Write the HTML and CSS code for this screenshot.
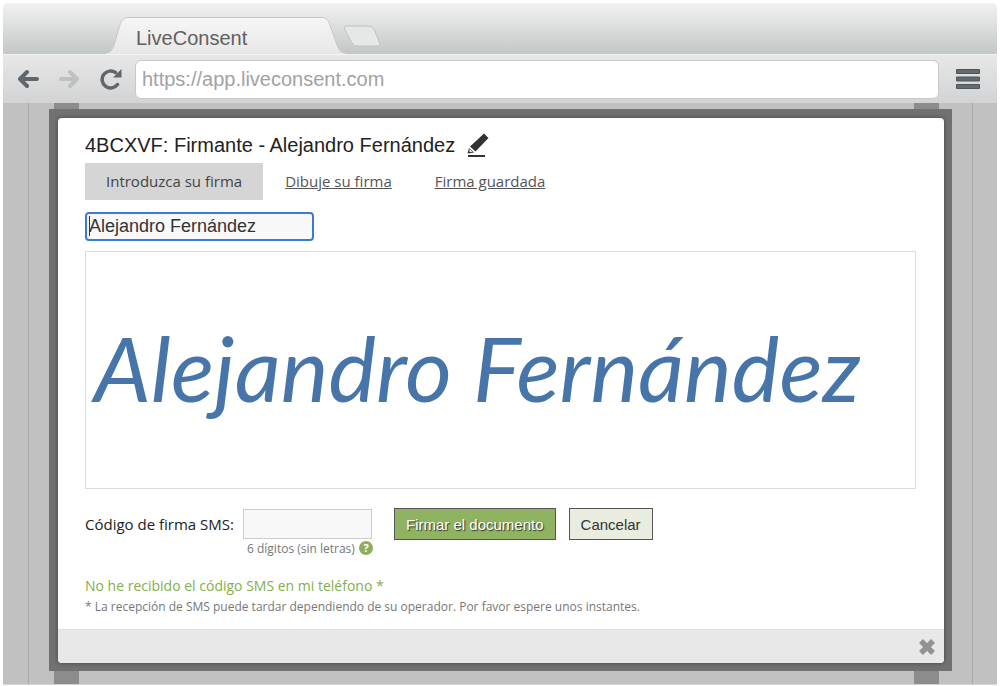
FILE: index.html
```html
<!DOCTYPE html>
<html lang="es">
<head>
	<meta charset="utf-8">
	<meta name="viewport" content="width=device-width, initial-scale=1">
	<title>LiveConsent</title>
	<link rel="stylesheet" href="styles.css">
</head>
<body>

    <div class="browser">
        <div class="tab-strip">
            <svg class="tab-side" width="24" height="37" viewBox="0 0 24 37">
                <defs>
                    <linearGradient id="tabFill" x1="0" y1="0" x2="0" y2="1">
                        <stop offset="0" stop-color="#f6f6f6"/>
                        <stop offset="1" stop-color="#e7e7e7"/>
                    </linearGradient>
                </defs>
                <path d="M0 37C6 36 8 34 10 28L15 11C17 4 19 1 24 0V37Z" fill="url(#tabFill)"/>
                <path d="M0 36.500C6 35.500 8 33.500 10 28L15 11C17 4 19 1 24 .5" fill="none" stroke="#c6c8c8"/>
            </svg>
            <div class="tab">LiveConsent</div>
            <svg class="tab-side" width="26" height="37" viewBox="0 0 26 37">
                <path d="M26 37C19 36 17 34 15 28L9 11C7 4 5 1 0 0V37Z" fill="url(#tabFill)"/>
                <path d="M26 36.500C19 35.500 17 33.500 15 28L9 11C7 4 5 1 0 .5" fill="none" stroke="#c6c8c8"/>
            </svg>
            <svg class="new-tab" width="38" height="22" viewBox="0 0 38 22">
                <path d="M4 1H25Q29 1 31 4L36 16Q38 21 34 21H14Q11 21 9 18L2 5Q0 1 4 1Z" fill="#e6e7e7" stroke="#bfc1c1"/>
            </svg>
        </div>

        <div class="toolbar">
            <button class="icon-button" aria-label="Atrás">
                <svg width="22" height="20" viewBox="0 0 22 20" fill="none" stroke="#5f676c" stroke-width="4" stroke-linecap="round" stroke-linejoin="round">
                    <path d="M9 3L2 10L9 17M3 10H19"/>
                </svg>
            </button>
            <button class="icon-button" aria-label="Adelante">
                <svg width="22" height="20" viewBox="0 0 22 20" fill="none" stroke="#bfc0c1" stroke-width="4" stroke-linecap="round" stroke-linejoin="round">
                    <path d="M11 3L18 10L11 17M17 10H2"/>
                </svg>
            </button>
            <button class="icon-button" aria-label="Recargar">
                <svg width="22" height="22" viewBox="0 0 22 22">
                    <path d="M17.500 16.500A8.500 8.500 0 1 1 15.500 4.500" fill="none" stroke="#5f676c" stroke-width="3.500" stroke-linecap="round"/>
                    <path d="M21.500 1V9.500H13Z" fill="#5f676c"/>
                </svg>
            </button>
            <input class="address" type="text" value="https://app.liveconsent.com" aria-label="Dirección">
            <button class="icon-button menu" aria-label="Menú">
                <svg width="24" height="20" viewBox="0 0 24 20" fill="#626a70" stroke="#4f565b">
                    <path d="M.5.5h23v4H.5zM.5 8h23v4H.5zM.5 15.500h23v4H.5z"/>
                </svg>
            </button>
        </div>

        <div class="page">
            <div class="modal-frame">
                <div class="modal">
                    <div class="modal-body">
                        <div class="heading">
                            <h1>4BCXVF: Firmante - Alejandro Fernández</h1>
                            <button class="icon-button" aria-label="Editar">
                                <svg width="24" height="26" viewBox="0 0 24 26" fill="#333">
                                    <path d="M18 1.500L22.500 6L9.500 19.500L4 14.500ZM3 16L8 20.500L1.500 21.500Z"/>
                                    <path d="M3.500 17L6.500 19.800L3.500 20Z" fill="#fff"/>
                                    <path d="M2 23h17v2H2z"/>
                                </svg>
                            </button>
                        </div>

                        <div class="tabs">
                            <a class="active" href="#">Introduzca su firma</a>
                            <a href="#">Dibuje su firma</a>
                            <a href="#">Firma guardada</a>
                        </div>

                        <div class="name-field">
                            <span class="caret"></span>
                            <input class="name" type="text" value="Alejandro Fernández" aria-label="Nombre">
                        </div>

                        <div class="signature">Alejandro Fernández</div>

                        <div class="sms">
                            <label for="code">Código de firma SMS:</label>
                            <div class="code">
                                <input type="text" id="code">
                                <div class="hint">
                                    6 dígitos (sin letras)
                                    <button class="help" aria-label="Ayuda">?</button>
                                </div>
                            </div>
                            <button class="button sign">Firmar el documento</button>
                            <button class="button cancel">Cancelar</button>
                        </div>

                        <a class="resend" href="#">No he recibido el código SMS en mi teléfono *</a>
                        <p class="note">* La recepción de SMS puede tardar dependiendo de su operador. Por favor espere unos instantes.</p>
                    </div>

                    <div class="modal-footer">
                        <button class="icon-button" aria-label="Cerrar">
                            <svg width="18" height="18" viewBox="0 0 18 18">
                                <path d="M3 3L15 15M15 3L3 15" stroke="#929292" stroke-width="5.500"/>
                            </svg>
                        </button>
                    </div>
                </div>
            </div>
        </div>
    </div>

</body>
</html>
```
FILE: styles.css
```css
* {
    box-sizing: border-box;
}

body {
    margin: 3px;
    background: #fff;
    font-family: "Open Sans", sans-serif;
    color: #333;
}

button {
    cursor: pointer;
}

.icon-button {
    display: flex;
    padding: 0;
    border: none;
    background: none;
}

.browser {
    border-radius: 5px 5px 0 0;
    overflow: hidden;
}

.tab-strip {
    display: flex;
    align-items: flex-end;
    height: 51px;
    padding-left: 101px;
    background: linear-gradient(#f1f1f1, #e2e4e3 35%, #c2c6c6);
}

.tab-side {
    display: block;
}

.tab {
    flex: 0 1 194px;
    height: 37px;
    padding-left: 8px;
    border-top: 1px solid #c6c8c8;
    background: linear-gradient(#f6f6f6, #e7e7e7);
    font: 20px/40px "Liberation Sans", Arial, sans-serif;
    color: #606060;
}

.new-tab {
    align-self: center;
    margin-top: 15px;
    margin-left: -5px;
}

.toolbar {
    display: flex;
    align-items: center;
    gap: 19px;
    height: 49px;
    padding: 0 17px 0 15px;
    border-top: 1px solid #f3f3f3;
    background: linear-gradient(#e7e7e7, #d2d3d4);
}

.address {
    flex: 1;
    min-width: 0;
    height: 39px;
    margin-left: -6px;
    margin-right: -2px;
    padding: 0 6px;
    border: 1px solid #c9c9c9;
    border-radius: 6px;
    background: #fff;
    font: 20px "Liberation Sans", Arial, sans-serif;
    color: #a2a2a2;
}

.page {
    padding: 6px 45px 13px 46px;
    border-bottom: 1px solid #d4d4d4;
    background:
        linear-gradient(#aaa, #aaa) 25px 0 / 1px 100% no-repeat,
        linear-gradient(#aaa, #aaa) right 24px top 0 / 1px 100% no-repeat,
        linear-gradient(#8c8c8c, #8c8c8c) 51px 0 / 25px 100% no-repeat,
        linear-gradient(#8c8c8c, #8c8c8c) right 58px top 0 / 25px 100% no-repeat,
        #c1c1c1;
}

.modal-frame {
    padding: 9px 8px 8px 9px;
    background: #717171;
}

.modal {
    border-radius: 4px;
    background: #fff;
    box-shadow: 0 0 4px #444;
    overflow: hidden;
}

.modal-body {
    padding: 13px 28px 11px 27px;
}

.heading {
    display: flex;
    align-items: center;
    gap: 11px;
    height: 28px;
}

h1 {
    margin: 0;
    font: 20px/28px "Liberation Sans", Arial, sans-serif;
    color: #222;
}

.tabs {
    display: flex;
    gap: 22px;
    margin-top: 4px;
}

.tabs a {
    line-height: 37px;
    font-size: 15px;
    color: #555;
    margin-right: 21px;
}

.tabs .active {
    margin-right: 0;
    padding: 0 21px;
    background: #d5d5d5;
    color: #444;
    text-decoration: none;
}

.name-field {
    position: relative;
    width: 229px;
    margin-top: 12px;
}

.name {
    display: block;
    width: 100%;
    height: 29px;
    padding: 0 2px;
    border: 2px solid #3b7bd8;
    border-radius: 4px;
    background: #f8f8f8;
    font: 18px "Liberation Sans", Arial, sans-serif;
    color: #333;
}

.caret {
    position: absolute;
    top: 4px;
    left: 4px;
    width: 1px;
    height: 20px;
    background: #333;
}

.signature {
    height: 238px;
    margin-top: 10px;
    padding-left: 8px;
    border: 1px solid #dcdcdc;
    font: italic 90px/230px "Lato", cursive;
    color: #4775aa;
    white-space: nowrap;
}

.sms {
    display: flex;
    align-items: flex-start;
    margin-top: 19px;
}

.sms label {
    width: 158px;
    line-height: 32px;
    font-size: 15px;
    color: #222;
}

.code {
    width: 130px;
    margin-right: 21px;
}

.code input {
    display: block;
    width: 129px;
    height: 30px;
    margin-top: 1px;
    border: 1px solid #ccc;
    background: #f8f8f8;
}

.hint {
    display: flex;
    align-items: center;
    justify-content: space-between;
    height: 18px;
    padding-left: 4px;
    font-size: 12px;
    color: #777;
    white-space: nowrap;
}

.help {
    width: 14px;
    height: 14px;
    padding: 0;
    border: none;
    border-radius: 50%;
    background: #8fae5d;
    font: bold 11px/14px "Open Sans", sans-serif;
    color: #fff;
}

.button {
    height: 32px;
    padding: 0 11px;
    border: 1px solid #555;
    font: 15px "Liberation Sans", Arial, sans-serif;
}

.sign {
    margin-right: 13px;
    background: #8fb360;
    color: #fff;
    text-shadow: 1px 1px 1px #333;
}

.cancel {
    background: #e8eddf;
    color: #333;
}

.resend {
    display: block;
    margin-top: 19px;
    line-height: 20px;
    font-size: 14px;
    color: #84ae4c;
    text-decoration: none;
}

.note {
    margin: 0;
    line-height: 22px;
    font-size: 12px;
    color: #777;
}

.modal-footer {
    display: flex;
    align-items: center;
    justify-content: flex-end;
    height: 34px;
    padding-right: 8px;
    border-top: 1px solid #ddd;
    background: #e8e8e8;
}
```
